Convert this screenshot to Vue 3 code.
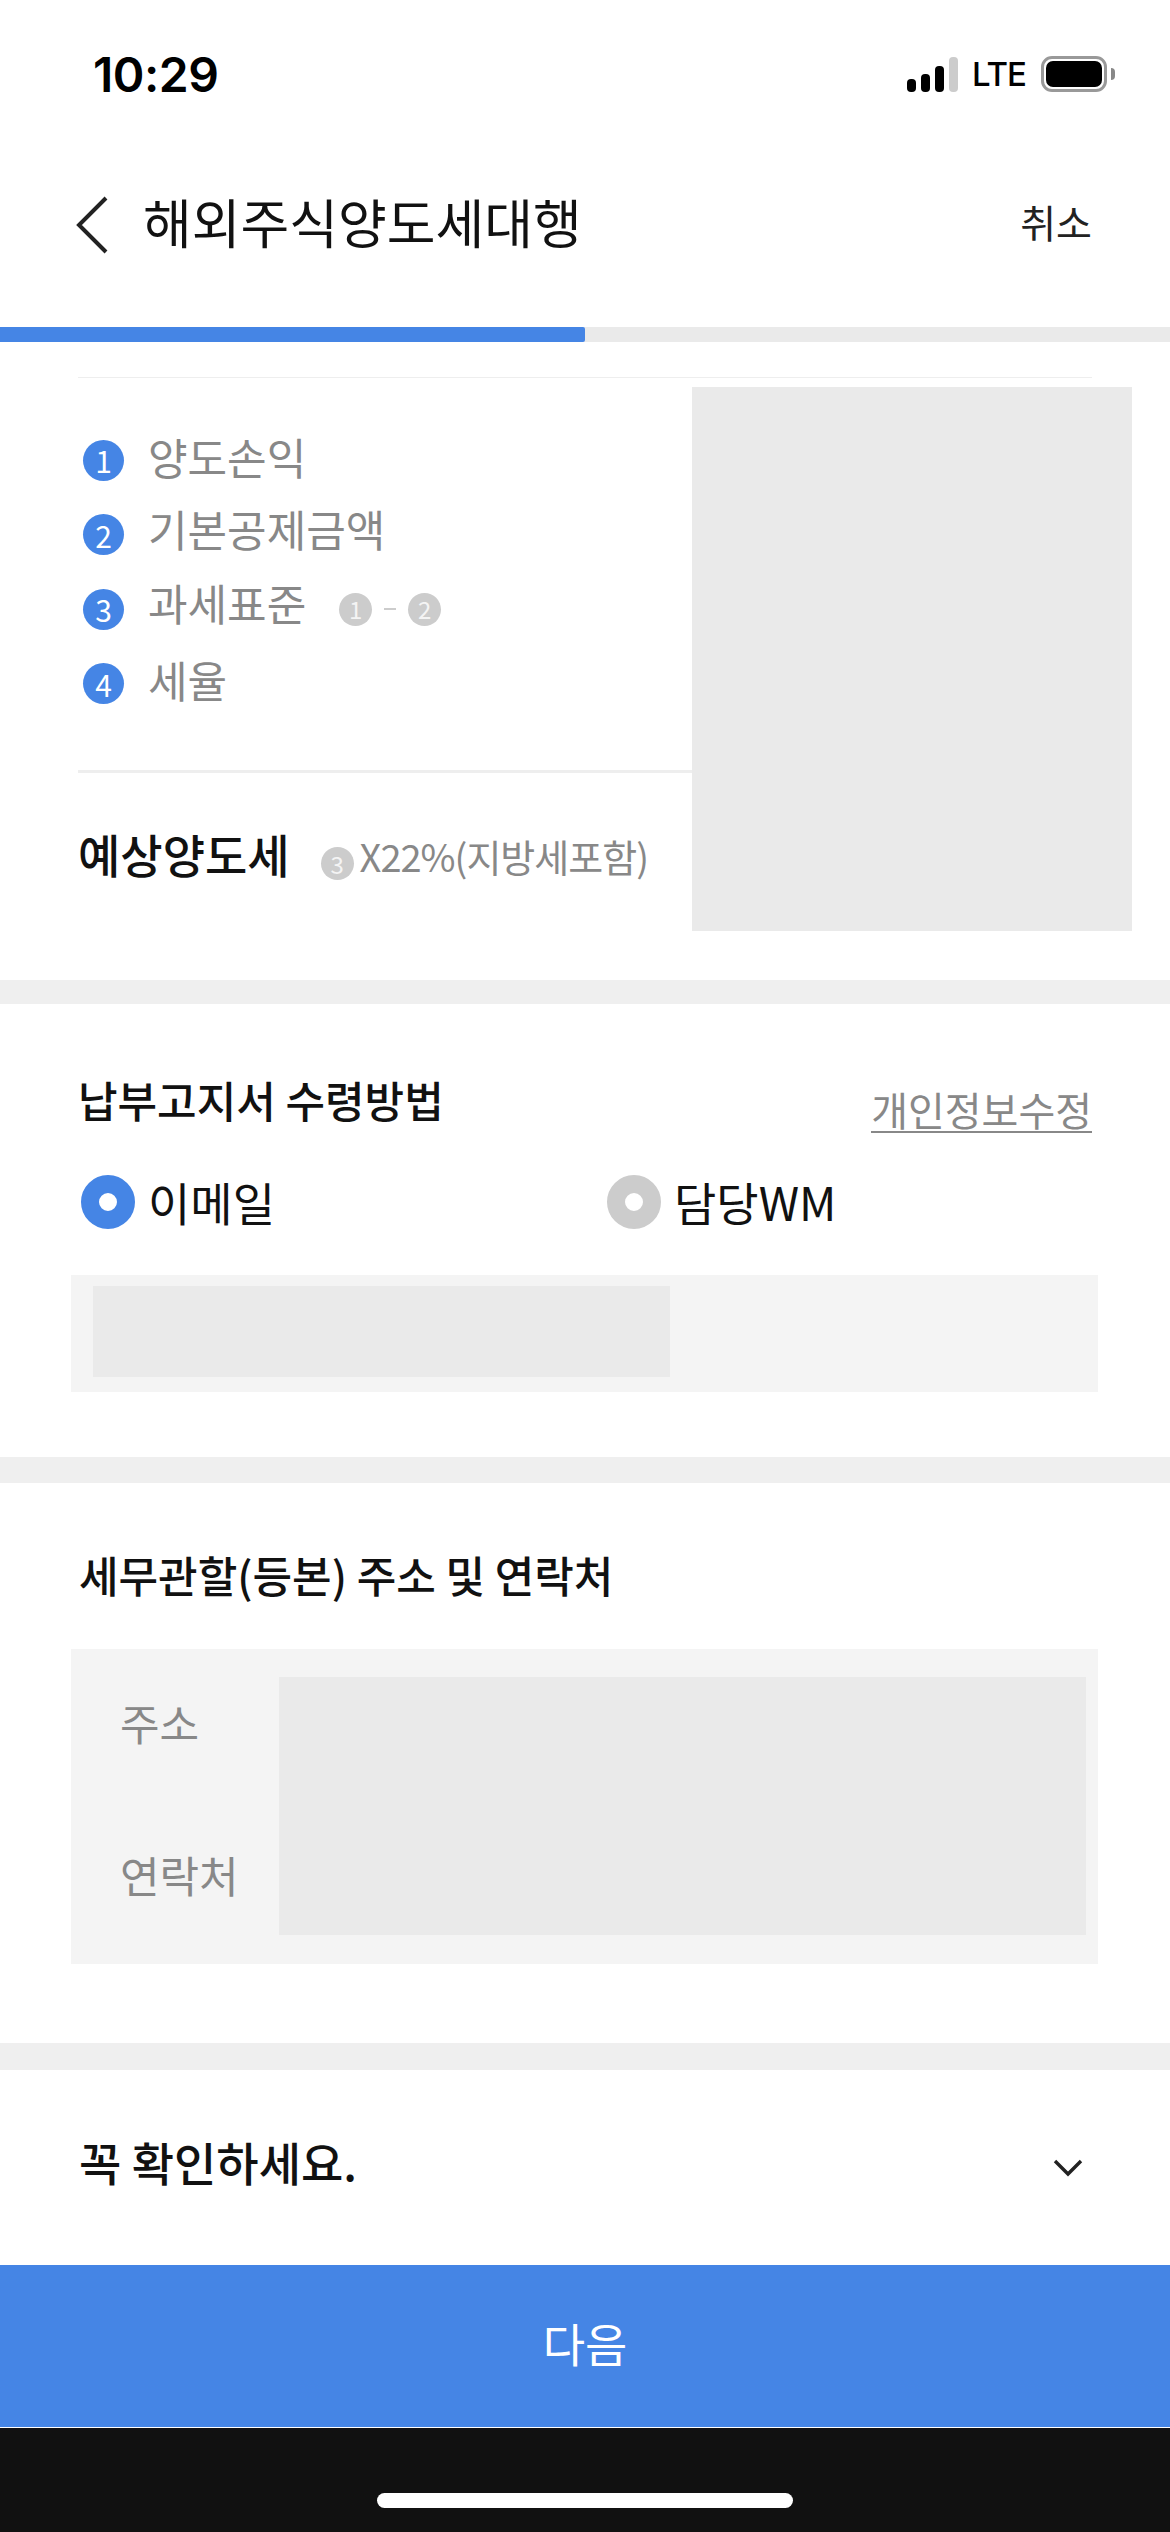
<template>
  <div class="page">
    <div class="status-bar">
      <span class="time">10:29</span>
      <div class="status-icons">
        <div class="signal">
          <i class="bar b1"></i>
          <i class="bar b2"></i>
          <i class="bar b3"></i>
          <i class="bar b4"></i>
        </div>
        <span class="lte">LTE</span>
        <div class="battery"><i class="battery-fill"></i></div>
        <i class="battery-nub"></i>
      </div>
    </div>

    <header class="nav">
      <svg class="back" width="34" height="60" viewBox="0 0 34 60">
        <path d="M31 3 L4 30 L31 57" fill="none" stroke="#222" stroke-width="4" />
      </svg>
      <h1>해외주식양도세대행</h1>
      <button type="button" class="cancel">취소</button>
    </header>

    <div class="progress"><div class="progress-fill"></div></div>

    <section class="summary">
      <div class="top-rule"></div>
      <div class="summary-row">
        <div class="summary-main">
          <ul class="steps">
            <li v-for="step in steps" :key="step.n">
              <span class="num">{{ step.n }}</span>
              <span class="step-label">{{ step.label }}</span>
              <span v-if="step.n === 3" class="formula">
                <span class="mini">1</span>
                <span class="dash"></span>
                <span class="mini">2</span>
              </span>
            </li>
          </ul>
          <div class="estimate">
            <strong>예상양도세</strong>
            <span class="mini est-mini">3</span>
            <span class="est-note">X22%(지방세포함)</span>
          </div>
        </div>
        <div class="mask mask-summary"></div>
      </div>
    </section>

    <div class="band"></div>

    <section class="notice">
      <div class="notice-head">
        <h2>납부고지서 수령방법</h2>
        <a class="edit-link">개인정보수정</a>
      </div>
      <div class="radios">
        <label class="radio"><i class="dot on"></i><span>이메일</span></label>
        <label class="radio"><i class="dot"></i><span>담당WM</span></label>
      </div>
      <div class="panel email-panel"><div class="mask mask-email"></div></div>
    </section>

    <div class="band band-tall"></div>

    <section class="address">
      <h2>세무관할(등본) 주소 및 연락처</h2>
      <div class="panel address-panel">
        <div class="address-labels">
          <span>주소</span>
          <span>연락처</span>
        </div>
        <div class="mask mask-address"></div>
      </div>
    </section>

    <div class="band band-tallest"></div>

    <section class="check">
      <h2>꼭 확인하세요.</h2>
      <svg width="30" height="18" viewBox="0 0 30 18">
        <path d="M2 2 L15 15 L28 2" fill="none" stroke="#222" stroke-width="3.4" />
      </svg>
    </section>

    <button type="button" class="next"><span>다음</span></button>

    <div class="home-area"><div class="home-bar"></div></div>
  </div>
</template>

<script setup>
const steps = [
  { n: 1, label: '양도손익' },
  { n: 2, label: '기본공제금액' },
  { n: 3, label: '과세표준' },
  { n: 4, label: '세율' },
]
</script>

<style>
html,
body {
  margin: 0;
  background: #fff;
}
</style>

<style scoped>
.page {
  width: 1170px;
  height: 2532px;
  overflow: hidden;
  display: flex;
  flex-direction: column;
  background: #fff;
  color: #111;
  font-family: 'Noto Sans CJK KR', 'Noto Sans', sans-serif;
}

h1,
h2 {
  margin: 0;
  font-weight: 500;
}

.band {
  height: 24px;
  flex: none;
  background: #efefef;
}

.band-tall {
  height: 26px;
}

.band-tallest {
  height: 27px;
}

.status-bar {
  height: 120px;
  flex: none;
  box-sizing: border-box;
  padding: 0 55px 0 93px;
  display: flex;
  justify-content: space-between;
  align-items: flex-start;
}

.time {
  margin-top: 45px;
  font-family: Inter, sans-serif;
  font-size: 48px;
  line-height: 60px;
  font-weight: 600;
  color: #000;
  letter-spacing: -0.5px;
}

.status-icons {
  margin-top: 56px;
  display: flex;
  align-items: center;
}

.signal {
  display: flex;
  align-items: flex-end;
  gap: 5px;
  height: 35px;
}

.bar {
  width: 9px;
  border-radius: 4px;
  background: #000;
}

.b1 { height: 13px; }
.b2 { height: 18px; }
.b3 { height: 26px; }
.b4 { height: 35px; background: #ccc; }

.lte {
  margin-left: 14px;
  font-family: Inter, sans-serif;
  font-size: 33px;
  line-height: 36px;
  font-weight: 500;
  color: #000;
  letter-spacing: -1px;
}

.battery {
  margin-left: 15px;
  width: 66px;
  height: 36px;
  box-sizing: border-box;
  border: 3px solid #999;
  border-radius: 11px;
  padding: 2px;
}

.battery-fill {
  display: block;
  height: 100%;
  background: #000;
  border-radius: 7px;
}

.battery-nub {
  margin-left: 4px;
  width: 4px;
  height: 12px;
  background: #888;
  border-radius: 0 6px 6px 0;
}

.nav {
  height: 207px;
  flex: none;
  box-sizing: border-box;
  padding: 0 78px 6px 75px;
  display: flex;
  align-items: center;
}

.back {
  margin-top: 8px;
  flex: none;
}

.nav h1 {
  margin-left: 34px;
  flex: 1;
  font-size: 53px;
  line-height: 70px;
  font-weight: 400;
  color: #111;
}

.cancel {
  padding: 0;
  border: 0;
  background: none;
  font: inherit;
  font-size: 39px;
  line-height: 50px;
  color: #222;
}

.progress {
  height: 15px;
  flex: none;
  background: #eaeaea;
}

.progress-fill {
  width: 585px;
  height: 100%;
  background: #4585e5;
  border-radius: 0 2px 2px 0;
}

.summary {
  height: 638px;
  flex: none;
  box-sizing: border-box;
  padding: 35px 38px 0 78px;
}

.top-rule {
  width: 1014px;
  height: 1px;
  background: #eee;
}

.summary-row {
  margin-top: 9px;
  display: flex;
}

.summary-main {
  width: 614px;
  flex: none;
}

.mask {
  background: #eaeaea;
}

.mask-summary {
  width: 440px;
  height: 544px;
  flex: none;
}

.steps {
  margin: 0;
  padding: 36px 0 0 5px;
  list-style: none;
}

.steps li {
  height: 74.5px;
  display: flex;
  align-items: center;
}

.num {
  width: 41px;
  height: 41px;
  flex: none;
  display: flex;
  align-items: center;
  justify-content: center;
  border-radius: 50%;
  background: #4585e5;
  color: #fff;
  font-size: 30px;
  line-height: 1;
}

.step-label {
  margin-left: 24px;
  padding-bottom: 8px;
  font-size: 43px;
  line-height: 56px;
  color: #888;
}

.steps li:nth-child(2) .step-label,
.steps li:nth-child(3) .step-label {
  padding-bottom: 14px;
}

.steps li:nth-child(4) .step-label {
  padding-bottom: 10px;
}

.formula {
  margin-left: 33px;
  display: flex;
  align-items: center;
}

.mini {
  width: 33px;
  height: 33px;
  flex: none;
  display: flex;
  align-items: center;
  justify-content: center;
  border-radius: 50%;
  background: #ccc;
  color: #f4f4f4;
  font-size: 24px;
  line-height: 1;
}

.dash {
  width: 12px;
  height: 2px;
  margin: 0 12px;
  background: #ccc;
}

.estimate {
  margin-top: 49px;
  padding-bottom: 8px;
  border-top: 3px solid #eee;
  display: flex;
  align-items: center;
  height: 170px;
  box-sizing: border-box;
}

.estimate strong {
  font-size: 46px;
  line-height: 60px;
  font-weight: 500;
  color: #111;
}

.est-mini {
  margin-left: 31px;
  margin-top: 22px;
}

.est-note {
  margin-left: 6px;
  margin-top: 6px;
  font-size: 38px;
  line-height: 50px;
  color: #888;
  letter-spacing: -1px;
}

.notice {
  height: 453px;
  flex: none;
  box-sizing: border-box;
  padding: 65px 72px 0 71px;
}

.notice-head {
  padding: 0 6px 0 7px;
  height: 60px;
  display: flex;
  justify-content: space-between;
  align-items: flex-start;
}

.notice h2,
.address h2 {
  font-size: 43px;
  line-height: 60px;
}

.edit-link {
  margin-top: 19px;
  font-size: 40px;
  line-height: 43px;
  color: #888;
  border-bottom: 2px solid #888;
}

.radios {
  margin-top: 46px;
  padding-left: 10px;
  display: flex;
}

.radio {
  width: 526px;
  flex: none;
  display: flex;
  align-items: center;
  gap: 13px;
  height: 54px;
  font-size: 46px;
  line-height: 54px;
  color: #111;
}

.radio span {
  margin-top: -3px;
}

.dot {
  width: 54px;
  height: 54px;
  flex: none;
  box-sizing: border-box;
  border-radius: 50%;
  border: 18px solid #ccc;
  background: #fff;
}

.dot.on {
  border-color: #4585e5;
}

.panel {
  background: #f4f4f4;
}

.email-panel {
  margin-top: 46px;
  height: 117px;
  box-sizing: border-box;
  padding: 11px 0 0 22px;
}

.mask-email {
  width: 577px;
  height: 91px;
}

.address {
  height: 560px;
  flex: none;
  box-sizing: border-box;
  padding: 61px 72px 0 71px;
}

.address h2 {
  padding-left: 8px;
}

.address-panel {
  margin-top: 45px;
  height: 315px;
  box-sizing: border-box;
  padding: 28px 12px 29px 0;
  display: flex;
}

.address-labels {
  width: 208px;
  flex: none;
  box-sizing: border-box;
  padding: 15px 0 0 49px;
  display: flex;
  flex-direction: column;
  gap: 92px;
  font-size: 43px;
  line-height: 60px;
  color: #888;
}

.mask-address {
  flex: 1;
}

.check {
  height: 195px;
  flex: none;
  box-sizing: border-box;
  padding: 0 87px 14px 79px;
  display: flex;
  justify-content: space-between;
  align-items: center;
}

.check h2 {
  font-size: 46px;
  line-height: 60px;
}

.check svg {
  margin-top: 14px;
}

.next {
  height: 162px;
  flex: none;
  padding: 0 0 8px;
  border: 0;
  background: #4585e5;
  color: #fff;
  font: inherit;
  font-size: 46px;
}

.home-area {
  margin-top: 1px;
  flex: 1;
  background: #111;
  display: flex;
  justify-content: center;
  padding-top: 65px;
  box-sizing: border-box;
}

.home-bar {
  width: 416px;
  height: 15px;
  border-radius: 8px;
  background: #fff;
}
</style>
